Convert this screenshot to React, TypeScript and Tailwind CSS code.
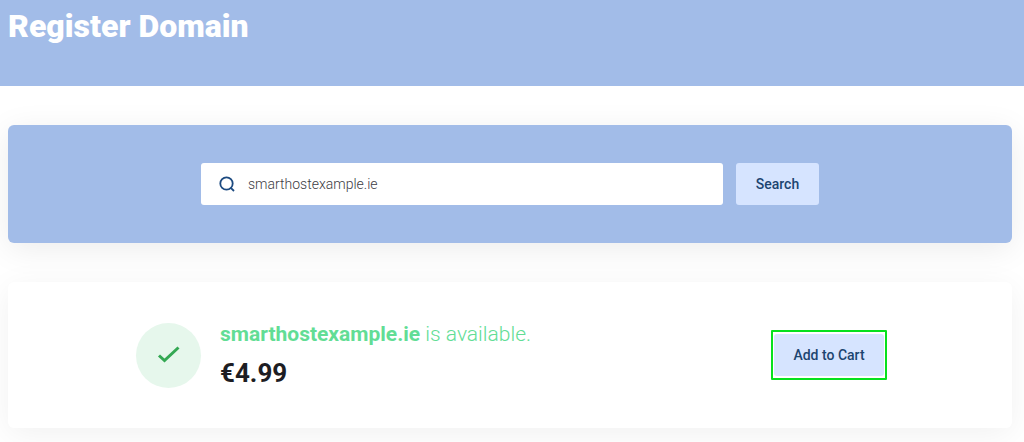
import React, { useState } from "react";

type Result = {
  domain: string;
  price: string;
};

const result: Result = { domain: "smarthostexample.ie", price: "€4.99" };

export default function App() {
  return (
    <div className="min-h-screen overflow-hidden bg-white font-['Roboto',sans-serif] text-[#1d1d23]">
      <header className="bg-[#a2bce8] px-2 pt-1.5 pb-10">
        <h1 className="text-[32px] leading-10 font-black text-white">
          Register Domain
        </h1>
      </header>
      <main className="flex flex-col gap-[39px] pt-[39px] pr-3 pb-[14px] pl-2">
        <SearchPanel />
        <ResultPanel result={result} />
      </main>
    </div>
  );
}

function SearchPanel() {
  const [query, setQuery] = useState(result.domain);

  const onSubmit = (e: React.FormEvent<HTMLFormElement>) => {
    e.preventDefault();
  };

  return (
    <section className="rounded-md bg-[#a2bce8] px-6 py-[38px] shadow-[0_6px_32px_rgba(0,0,0,0.08)]">
      <form
        className="mx-auto flex max-w-[618px] gap-[13px]"
        onSubmit={onSubmit}
      >
        <label className="flex h-[42px] min-w-0 flex-1 items-center gap-[13px] rounded-[3px] bg-white px-[18px]">
          <SearchIcon />
          <input
            type="text"
            aria-label="Domain name"
            className="min-w-0 flex-1 text-sm font-light text-[#3c3c44] outline-none"
            value={query}
            onChange={(e) => setQuery(e.target.value)}
          />
        </label>
        <button
          type="submit"
          className="h-[42px] w-[83px] rounded-[3px] bg-[#d6e4ff] text-sm font-medium text-[#1c4470]"
        >
          Search
        </button>
      </form>
    </section>
  );
}

function ResultPanel({ result }: { result: Result }) {
  return (
    <section className="relative rounded-md bg-white px-6 py-9 shadow-[0_6px_32px_rgba(0,0,0,0.06)]">
      <div className="mx-auto flex max-w-[748px] items-center">
        <div className="flex size-[65px] shrink-0 items-center justify-center rounded-full bg-[#e6f7ec]">
          <CheckIcon />
        </div>
        <div className="ml-[19px] flex-1">
          <p className="text-[21px] leading-8 font-light text-[#62dd95]">
            <strong className="font-bold">{result.domain}</strong> is available.
          </p>
          <p className="mt-1 text-[26px] leading-[38px] font-bold">
            {result.price}
          </p>
        </div>
        <div className="-mx-[3px] rounded-[1px] border-2 border-[#06e11e] px-px py-0.5">
          <button
            type="button"
            className="block h-[42px] w-[110px] rounded-[3px] bg-[#d6e4ff] text-sm font-medium text-[#1c4470]"
          >
            Add to Cart
          </button>
        </div>
      </div>
    </section>
  );
}

function SearchIcon() {
  return (
    <svg
      className="size-4 shrink-0"
      viewBox="0 0 16 16"
      fill="none"
      stroke="#1c4a80"
      strokeWidth="1.8"
      aria-hidden="true"
    >
      <circle cx="7.5" cy="7.5" r="6.2" />
      <path d="M11.8 11.8 15 15" />
    </svg>
  );
}

function CheckIcon() {
  return (
    <svg
      className="size-6"
      viewBox="0 0 24 24"
      fill="none"
      stroke="#34a853"
      strokeWidth="3"
      aria-hidden="true"
    >
      <path d="m2 12.5 5.5 5L21.5 4.5" />
    </svg>
  );
}
